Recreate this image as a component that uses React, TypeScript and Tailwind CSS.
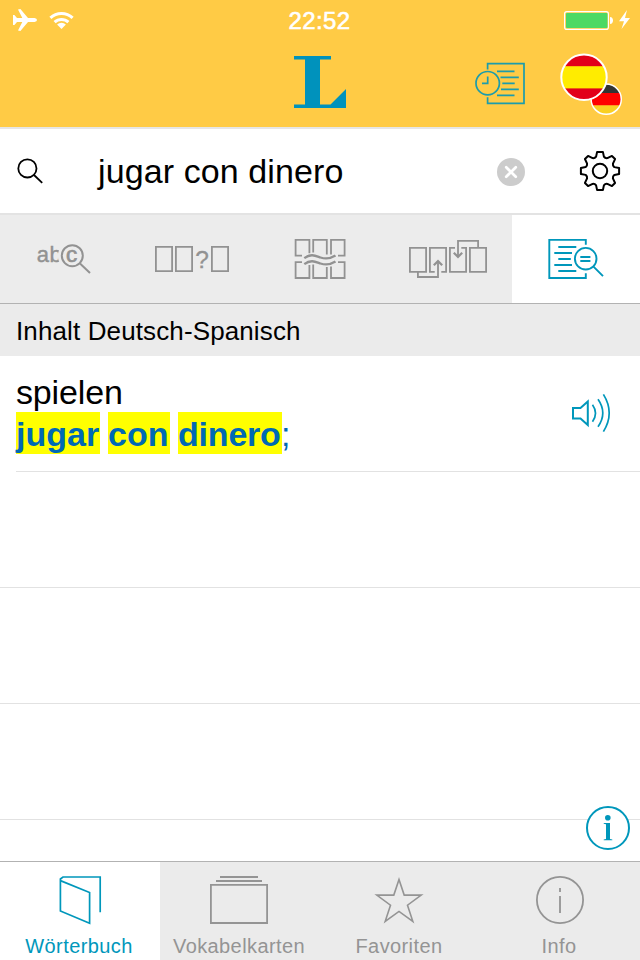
import type { ReactNode } from "react";

type IconProps = {
  x: number;
  y: number;
  w: number;
  h: number;
  stroke?: number;
  className?: string;
  children: ReactNode;
};

// Line icon, drawn in the coordinates of the 640pt wide canvas
const Icon = ({ x, y, w, h, stroke = 1.8, className = "", children }: IconProps) => (
  <svg
    width={w}
    height={h}
    viewBox={`${x} ${y} ${w} ${h}`}
    fill="none"
    stroke="currentColor"
    strokeWidth={stroke}
    className={`block shrink-0 ${className}`}
  >
    {children}
  </svg>
);

const gearPath = () => {
  const points: string[] = [];
  for (let i = 0; i < 8; i++) {
    const a = (i * Math.PI) / 4;
    // diagonal teeth are a little slimmer
    const t = i % 2 ? 2.2 : 2.9;
    const rot = (px: number, py: number) =>
      `${(px * Math.cos(a) - py * Math.sin(a)).toFixed(2)} ${(px * Math.sin(a) + py * Math.cos(a)).toFixed(2)}`;
    points.push(`${i === 0 ? "M" : "L"}${rot(-t, -19.1)} L${rot(t, -19.1)} L${rot(3.9, -14.4)} Q${rot(5.1, -12.6)} ${rot(7.4, -12.9)}`);
  }
  return points.join(" ") + "Z";
};

const StatusBar = () => (
  <div className="flex h-10 items-center pl-3 pr-[7px] text-white">
    <div className="flex w-[276.5px] items-center gap-3">
      <Icon x={0} y={0} w={26} h={22} className="ml-px">
        <path
          d="M0 6 1.4 6 4 9.1 9.3 9.1 5 .4 7.4 0 15 9.1 21.5 9.1Q24 9.6 24 11T21.5 12.9L15 12.9 7.4 22 5 21.6 9.3 12.9 4 12.9 1.4 16 0 16Z"
          fill="currentColor"
          stroke="none"
        />
      </Icon>
      <Icon x={0} y={0} w={25} h={19} stroke={3} className="-ml-0.5">
        <path d="M1.4 6.9a16 16 0 0 1 22.2 0M5.6 11.2a10 10 0 0 1 13.8 0" />
        <path d="M8.1 13.6a6.2 6.2 0 0 1 8.8 0L12.5 18Z" fill="currentColor" stroke="none" />
      </Icon>
    </div>
    <span className="pt-0.5 text-[24px] leading-none tracking-[0.4px] [-webkit-text-stroke:0.6px_white]">22:52</span>
    <Icon x={563} y={9} w={70} h={22} className="ml-auto">
      <rect x="564.6" y="11.6" width="43.8" height="17.8" rx="2.2" stroke="white" strokeWidth="1.2" />
      <rect x="566" y="13" width="41.5" height="15" rx="1" fill="#4cd964" stroke="none" />
      <path d="M610 17c4 0 4 7 0 7Z" fill="white" stroke="none" />
      <path d="M627 10 619 21.2H624L621.5 29 630 18H625Z" fill="white" stroke="none" />
    </Icon>
  </div>
);

const Header = () => (
  <header className="h-[129px] border-b-2 border-[#e6e6e6] bg-[#ffcb45]">
    <StatusBar />
    <div className="flex pl-[294px] pt-3 text-[#0092bc]">
      <Icon x={294} y={52} w={54} h={64}>
        <path d="M294 56H331V59.4H320V104.6H330.5L346 89V108H294V104.6H305V59.4H294Z" fill="currentColor" stroke="none" />
      </Icon>
      <Icon x={474} y={52} w={54} h={64} stroke={1.7} className="ml-[126px] text-[#1c9cac]">
        <path d="M487.6 69.5V63.7H524V103.3H487.6V97.3" />
        <circle cx="487.7" cy="83.2" r="11.7" />
        <path d="M487.7 76.5V83.3H482M497 71.3H514.5M500.5 77.3H518.8M502.3 83.3H514.7M501 89.3H518.8M497 95.3H514.5" />
      </Icon>
      <Icon x={558} y={52} w={68} h={64} className="ml-[30px]">
        <defs>
          <clipPath id="de">
            <circle cx="606.2" cy="99.2" r="14.8" />
          </clipPath>
          <clipPath id="es">
            <circle cx="584" cy="77.3" r="22.5" />
          </clipPath>
        </defs>
        <g clipPath="url(#de)" stroke="none">
          <rect x="590" y="83" width="33" height="10" fill="#333" />
          <rect x="590" y="93" width="33" height="12.5" fill="#f00" />
          <rect x="590" y="105.5" width="33" height="11" fill="#f9d023" />
        </g>
        <circle cx="606.2" cy="99.2" r="15.1" stroke="white" strokeWidth="1.5" />
        <g clipPath="url(#es)" stroke="none">
          <rect x="560" y="53" width="48" height="48" fill="#e2001a" />
          <rect x="560" y="66.2" width="48" height="22.2" fill="#ffec00" />
        </g>
        <circle cx="584" cy="77.3" r="22.7" stroke="white" strokeWidth="2" />
      </Icon>
    </div>
  </header>
);

const SearchBar = () => (
  <div className="flex h-[86px] items-center border-b-2 border-[#e3e3e3] bg-white pl-4 text-black">
    <Icon x={16} y={157} w={28} h={28}>
      <circle cx="27.4" cy="168.4" r="9.1" />
      <path d="M34 175 42.2 182.8" />
    </Icon>
    <span className="ml-[54px] w-[398px] text-[34px] leading-[40px] tracking-[0.1px]">jugar con dinero</span>
    <Icon x={496} y={157} w={30} h={28} stroke={2.7} className="mt-px">
      <circle cx="511" cy="171" r="14" fill="#ccc" stroke="none" />
      <path d="M506.2 166.2 515.8 175.8M515.8 166.2 506.2 175.8" stroke="white" strokeLinecap="round" />
    </Icon>
    <Icon x={-21} y={-21} w={42} h={42} stroke={2} className="ml-[53px]">
      <path d={gearPath()} strokeLinejoin="round" />
      <circle r="7.2" />
    </Icon>
  </div>
);

const ModeTabs = () => (
  <div className="grid h-[89px] grid-cols-5 border-b border-[#b2b2b2] bg-[#ececec] text-[#929292]">
    <Icon x={0} y={215} w={128} h={88} stroke={2}>
      <text x="36.8" y="261.7" fontSize="22" fill="currentColor" strokeWidth="0.4">a</text>
      <text x="49.4" y="261.7" fontSize="22" fill="currentColor" strokeWidth="0.4">b</text>
      <circle cx="72.3" cy="255.7" r="14.4" fill="#ececec" stroke="none" />
      <circle cx="72.3" cy="255.7" r="10.5" />
      <text x="66" y="261.6" fontSize="22.5" fill="currentColor" strokeWidth="0.7">c</text>
      <path d="M80 263.5 90 273" />
    </Icon>
    <Icon x={128} y={215} w={128} h={88}>
      <path d="M155.9 246.9H172.1V271.1H155.9ZM175.9 246.9H192.1V271.1H175.9ZM211.9 246.9H228.1V271.1H211.9Z" />
      <text x="195.3" y="268" fontSize="24.5" fill="currentColor" strokeWidth="0.3">?</text>
    </Icon>
    <Icon x={256} y={215} w={128} h={88}>
      <path d="M302 255.6H295.6V239.9H309.4V253.2M313.2 252.6V239.9H326.8V254.5M331 254.5V239.9H344.6V255.6H338" />
      <path d="M302 262.2H295.6V278H309.4V265M313.2 264.5V278H326.8V267M331 266.5V278H344.6V262.2H338" />
      <path d="M304.3 258.2C311 253 316 256 320.5 257.5S330 259 335.5 255.6M304.3 264.2C311 259 316 262 320.5 263.5S330 265 335.5 261.6" strokeWidth="2.3" />
    </Icon>
    <Icon x={384} y={215} w={128} h={88}>
      <path d="M409.9 247.9H426.1V271.9H409.9ZM434.7 271.9H429.9V247.9H446.1V271.9H441.3M455 247.9H449.9V271.9H466.1V247.9H461.3M469.9 247.9H486.1V271.9H469.9Z" />
      <path d="M417.9 272V277H438V261M478.1 248V240.9H458V257" />
      <path d="M433.8 265.3 438 261.1 442.2 265.3M453.8 252.7 458 256.9 462.2 252.7" strokeWidth="2.2" />
    </Icon>
    <div className="bg-white text-[#0097bb]">
      <Icon x={512} y={215} w={128} h={88} stroke={1.9}>
        <path d="M585.8 244.8V239.9H549.3V278H585.8V273.2" />
        <circle cx="585.7" cy="258.7" r="10.8" />
        <path d="M593.5 266.7 603 276.2M558.3 247H576.3M554.3 253H572M558.3 259H570.8M554.3 265H572M558.3 271H576.3M580.3 257H590.4M580.3 261H590.4" />
      </Icon>
    </div>
  </div>
);

const ResultList = () => (
  <main className="relative h-[557px] overflow-hidden bg-white">
    <h2 className="h-[52px] bg-[#ebebeb] pl-4 pt-0.5 text-[26px] leading-[51px] tracking-[0.12px] text-black">
      Inhalt Deutsch-Spanisch
    </h2>
    <div className="ml-4 flex h-[116px] border-b border-[#e2e2e2] pt-4">
      <div className="w-[554px] text-[34px]">
        <div className="h-10 leading-[40px] tracking-[-0.15px] text-black">spielen</div>
        <div className="flex h-[42px] leading-[44px] text-[#0069b4]">
          <b className="w-[84px] bg-[#ff0]">jugar</b>
          <b className="ml-2 w-[62px] bg-[#ff0]">con</b>
          <b className="ml-2 w-[104px] bg-[#ff0] tracking-[-0.2px]">dinero</b>
          <span className="-ml-px">;</span>
        </div>
      </div>
      <Icon x={570} y={392} w={42} h={42} className="mt-5 text-[#0097bb]">
        <path d="M573 408H580.5L587.8 401.5V425L580.5 418.5H573Z" strokeWidth="2" />
        <path
          d="M592.5 404.7Q598.5 413.2 592.5 421.7M598 399.3Q607.6 413 598 426.7M603.4 394.4Q615 413 603.4 431.6"
          strokeWidth="1.7"
        />
      </Icon>
    </div>
    <div className="h-[116px] border-b border-[#e2e2e2]" />
    <div className="h-[116px] border-b border-[#e2e2e2]" />
    <div className="h-[116px] border-b border-[#e2e2e2]" />
    {/* Floating info button */}
    <button className="absolute bottom-[10px] right-2 text-[#0097bb]">
      <Icon x={584} y={805} w={48} h={46} stroke={2}>
        <circle cx="608" cy="828" r="21" fill="white" />
        <circle cx="607.8" cy="817.8" r="2.8" fill="currentColor" stroke="none" />
        <path d="M603.7 823H610V839L612.3 839.4V840.2H603.7V839.4L606 839V824.2L603.7 823.8Z" fill="currentColor" stroke="none" />
      </Icon>
    </button>
  </main>
);

const tabs = [
  {
    label: "Wörterbuch",
    icon: (
      <Icon x={50} y={874} w={60} h={52} stroke={1.7}>
        <path d="M60.4 880.6 89.6 892.5V923.2L60.4 911ZM60.4 881V879L63 877H100.2V912.3" />
      </Icon>
    ),
  },
  {
    label: "Vokabelkarten",
    icon: (
      <Icon x={210} y={874} w={60} h={52}>
        <path d="M220 877H258M216 881H262M210.9 884.9H267.1V923H210.9Z" />
      </Icon>
    ),
  },
  {
    label: "Favoriten",
    icon: (
      <Icon x={370} y={874} w={60} h={52} stroke={1.6}>
        <path d="M399 879.5 404.2 895.1H421.2L407.5 905.2 412.8 921.3 399 911.4 385.2 921.3 390.5 905.2 376.8 895.1H393.8Z" />
      </Icon>
    ),
  },
  {
    label: "Info",
    icon: (
      <Icon x={530} y={874} w={60} h={52} stroke={1.8}>
        <circle cx="560" cy="900" r="23.1" />
        <path d="M560 888V892M560 896V913" />
      </Icon>
    ),
  },
];

const TabBar = () => (
  <nav className="grid h-[99px] grid-cols-4 border-t border-[#b2b2b2] bg-[#ebebeb]">
    {tabs.map(({ label, icon }, i) => (
      <div
        key={label}
        className={`flex flex-col items-center pt-3 ${i === 0 ? "bg-white text-[#0097bb]" : "text-[#949494]"}`}
      >
        {icon}
        <span className="mr-0.5 mt-2 text-[20px] leading-6 tracking-[0.4px]">{label}</span>
      </div>
    ))}
  </nav>
);

const App = () => {
  return (
    <div className="h-[960px] w-[640px] overflow-hidden bg-white font-['Liberation_Sans',Arial,sans-serif]">
      <Header />
      <SearchBar />
      <ModeTabs />
      <ResultList />
      <TabBar />
    </div>
  );
};

export default App;
